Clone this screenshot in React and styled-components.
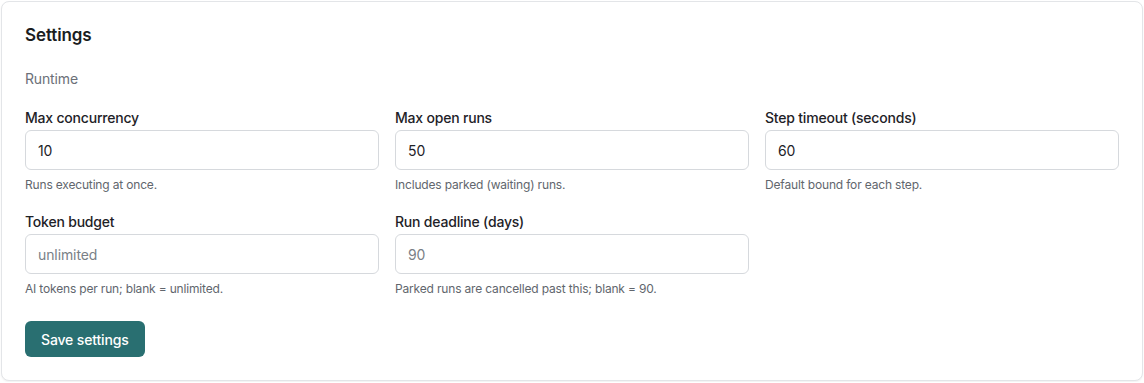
import React from "react";
import styled, { createGlobalStyle } from "styled-components";

const Global = createGlobalStyle`
  html, body { margin: 0; padding: 0; background: #ffffff; }
  body { font-family: Inter, "Noto Sans", "Liberation Sans", sans-serif; -webkit-font-smoothing: antialiased; }
  * { box-sizing: border-box; }
`;

const Page = styled.div`
  padding: 1px;
`;

const Card = styled.section`
  border: 1px solid #e3e5e8;
  border-radius: 8px;
  background: #fff;
  box-shadow: 0 1px 2px rgba(0, 0, 0, 0.06);
  padding: 23px;
`;

const Title = styled.h2`
  margin: 0;
  font-size: 17px;
  line-height: 20px;
  font-weight: 600;
  letter-spacing: -0.1px;
  color: #1a1d21;
`;

const SectionLabel = styled.div`
  margin-top: 24px;
  font-size: 14px;
  line-height: 20px;
  letter-spacing: -0.15px;
  color: #6b7078;
`;

const Grid = styled.div`
  margin-top: 19px;
  display: grid;
  grid-template-columns: repeat(3, 1fr);
  column-gap: 16px;
  row-gap: 19px;
`;

const Field = styled.div`
  display: flex;
  flex-direction: column;
`;

const Label = styled.label`
  font-size: 14px;
  line-height: 20px;
  font-weight: 500;
  letter-spacing: -0.2px;
  color: #1e2227;
  margin-bottom: 2px;
`;

const Input = styled.input`
  height: 40px;
  width: 100%;
  border: 1px solid #d6d9dd;
  border-radius: 6px;
  padding: 0 12px;
  font-family: inherit;
  font-size: 14px;
  letter-spacing: -0.1px;
  color: #1e2227;
  background: #fff;
  outline: none;
  &::placeholder { color: #7a7f87; }
`;

const Help = styled.div`
  margin-top: 7px;
  font-size: 12px;
  line-height: 16px;
  letter-spacing: -0.17px;
  color: #61666d;
`;

const Button = styled.button`
  margin-top: 24px;
  height: 36px;
  padding: 0 16px;
  border: none;
  border-radius: 6px;
  background: #296f71;
  color: #fff;
  font-family: inherit;
  font-size: 14px;
  font-weight: 500;
  letter-spacing: -0.15px;
  cursor: pointer;
`;

const fields = [
  { label: "Max concurrency", value: "10", help: "Runs executing at once." },
  { label: "Max open runs", value: "50", help: "Includes parked (waiting) runs." },
  { label: "Step timeout (seconds)", value: "60", help: "Default bound for each step." },
  { label: "Token budget", placeholder: "unlimited", help: "AI tokens per run; blank = unlimited." },
  { label: "Run deadline (days)", placeholder: "90", help: "Parked runs are cancelled past this; blank = 90." },
];

export default function App() {
  return (
    <Page>
      <Global />
      <Card>
        <Title>Settings</Title>
        <SectionLabel>Runtime</SectionLabel>
        <Grid>
          {fields.map((f) => (
            <Field key={f.label}>
              <Label>{f.label}</Label>
              <Input defaultValue={f.value} placeholder={f.placeholder} />
              <Help>{f.help}</Help>
            </Field>
          ))}
        </Grid>
        <Button>Save settings</Button>
      </Card>
    </Page>
  );
}
